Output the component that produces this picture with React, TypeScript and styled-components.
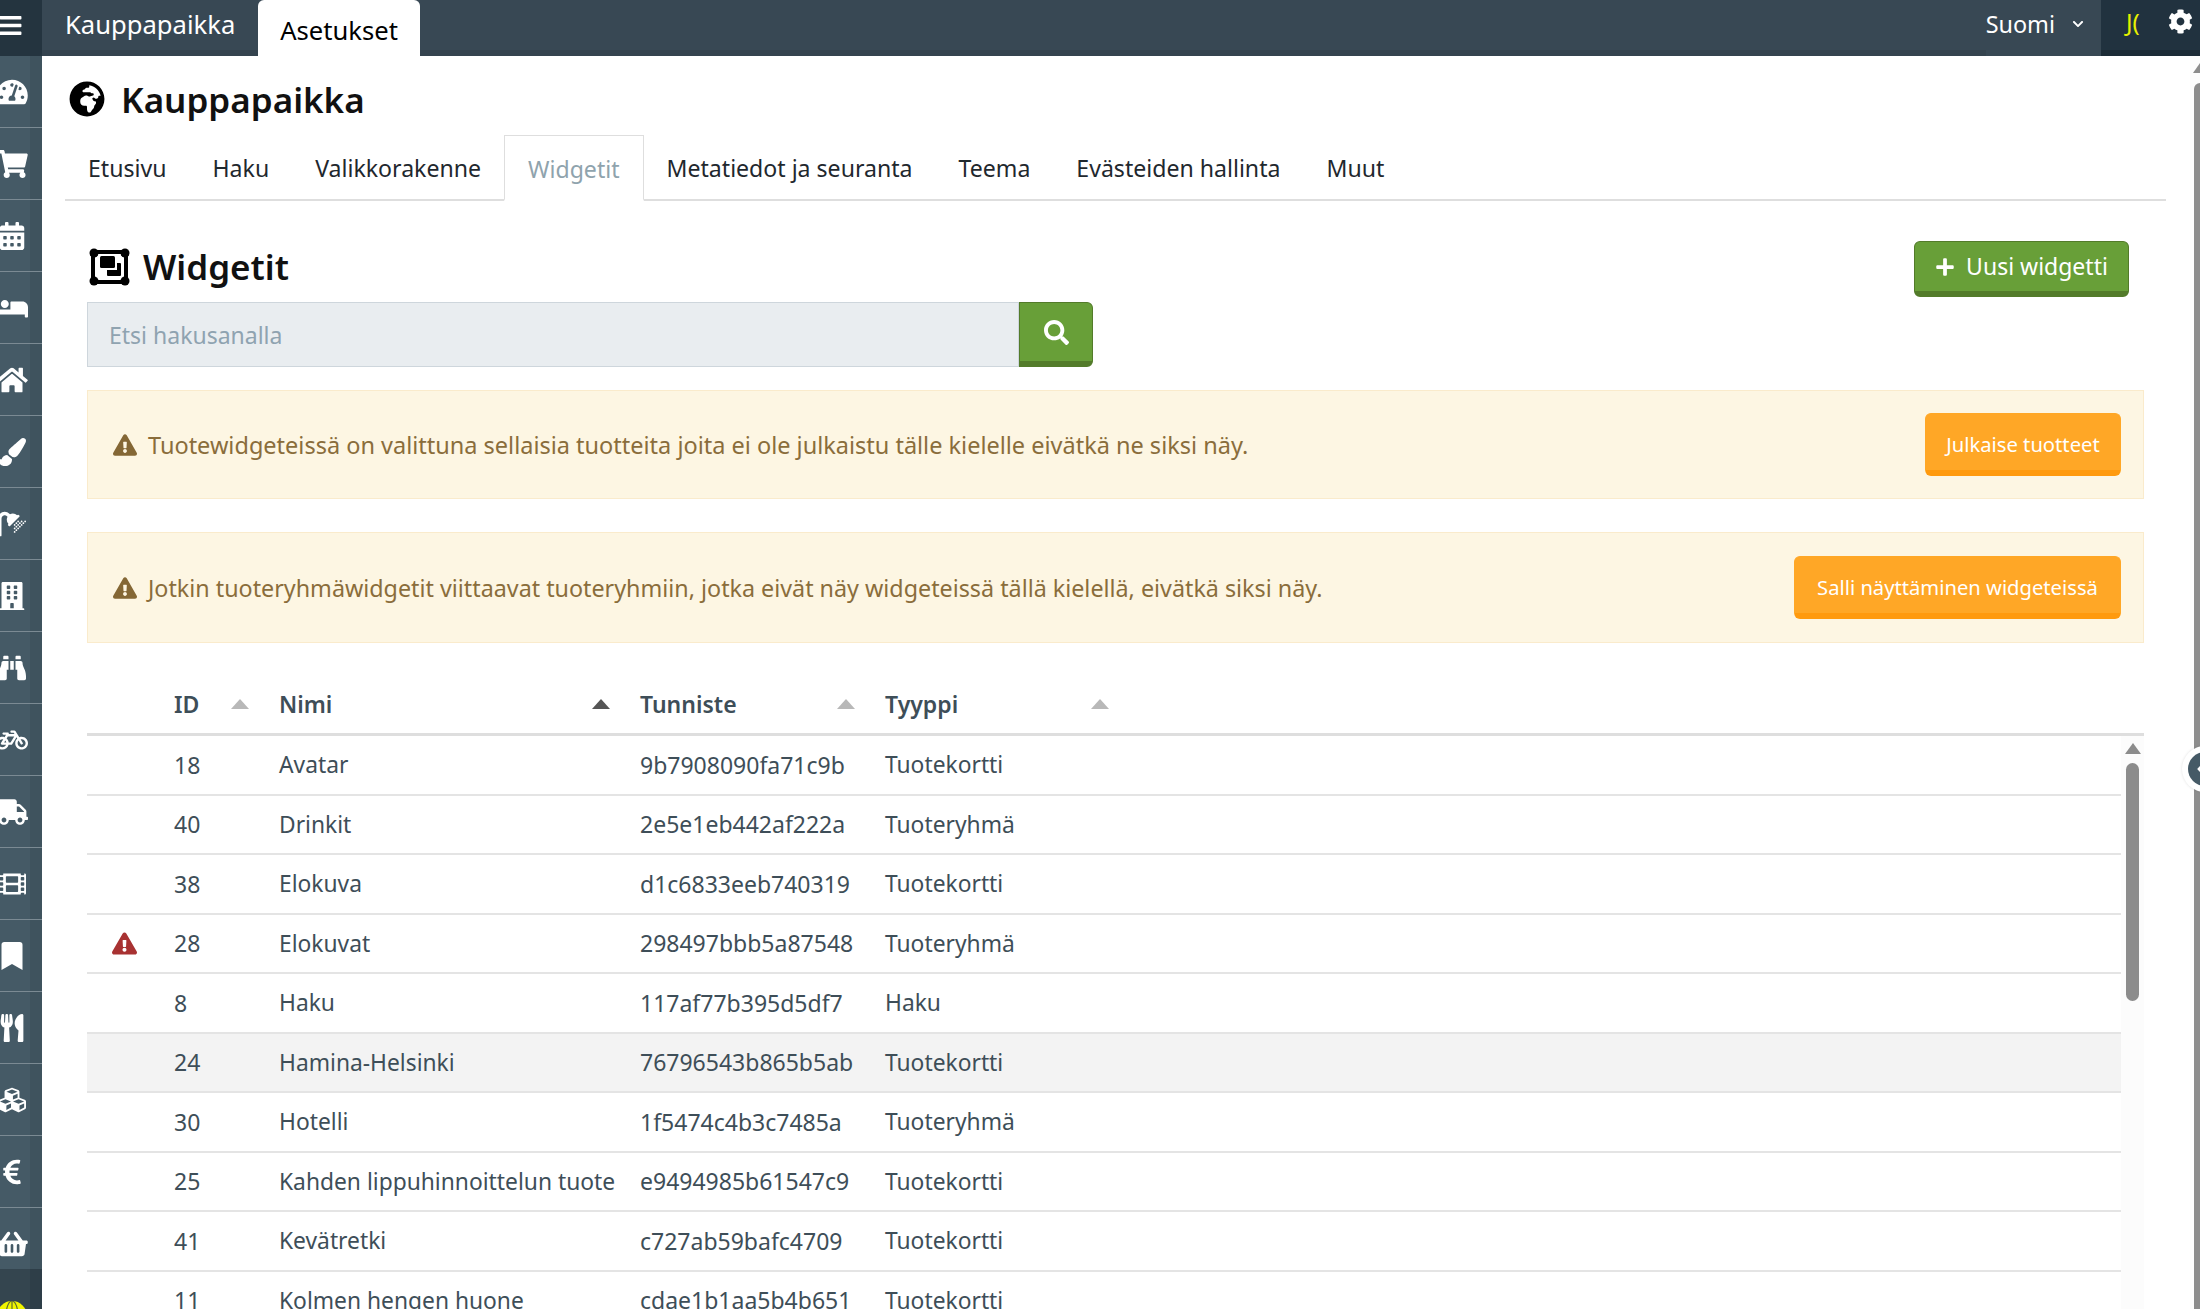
import React from 'react';
import styled, { createGlobalStyle } from 'styled-components';
import {
  FaBars,
  FaBed,
  FaBicycle,
  FaBinoculars,
  FaBookmark,
  FaBuilding,
  FaCalendarAlt,
  FaChevronDown,
  FaChevronLeft,
  FaCog,
  FaCubes,
  FaEuroSign,
  FaExclamationTriangle,
  FaFilm,
  FaGlobeAfrica,
  FaHome,
  FaPaintBrush,
  FaPlus,
  FaSearch,
  FaShoppingBasket,
  FaShoppingCart,
  FaShower,
  FaTachometerAlt,
  FaTruck,
  FaUtensils,
} from 'react-icons/fa';

const GlobalStyle = createGlobalStyle`
  html, body {
    margin: 0;
    padding: 0;
    height: 100%;
    overflow: hidden;
    background: #fff;
  }
  #root {
    height: 100%;
  }
  * {
    box-sizing: border-box;
  }
`;

const Page = styled.div`
  width: 2200px;
  height: 1309px;
  display: flex;
  flex-direction: column;
  position: relative;
  overflow: hidden;
  font-family: 'Noto Sans', 'Open Sans', sans-serif;
  color: #3e4e58;
`;

const TopBar = styled.header`
  height: 56px;
  flex: none;
  display: flex;
  background: #384854;
  border-bottom: 6px solid #34434e;
`;

const MenuButton = styled.div`
  width: 42px;
  height: 56px;
  flex: none;
  background: #24343f;
  color: #fff;
  font-size: 25px;
  display: flex;
  align-items: center;
  overflow: hidden;
  padding-bottom: 6px;
  svg {
    margin-left: -2px;
  }
`;

const AppTab = styled.div<{ $active?: boolean }>`
  height: 56px;
  flex: none;
  font-size: 25.6px;
  display: flex;
  align-items: center;
  padding: ${(p) => (p.$active ? '4px 22px 0' : '0 23px 8px')};
  color: ${(p) => (p.$active ? '#000' : '#fff')};
  background: ${(p) => (p.$active ? '#fff' : 'transparent')};
  border-radius: ${(p) => (p.$active ? '6px 6px 0 0' : '0')};
`;

const Spacer = styled.div`
  flex: 1;
`;

const Language = styled.div`
  height: 56px;
  display: flex;
  align-items: center;
  gap: 17px;
  padding: 0 17px 8px 0;
  color: #fff;
  font-size: 23.4px;
  background: #384854;
  svg {
    font-size: 12px;
  }
`;

const UserArea = styled.div`
  width: 99px;
  height: 56px;
  display: flex;
  align-items: center;
  justify-content: space-between;
  padding: 0 7px 8px 25px;
  background: #21323f;
  border-bottom: 6px solid #1c2b36;
  overflow: hidden;
`;

const Initials = styled.span`
  font-size: 24px;
  color: #e6f000;
`;

const GearIcon = styled(FaCog)`
  color: #fff;
  font-size: 25px;
`;

const Body = styled.div`
  flex: 1;
  min-height: 0;
  display: flex;
`;

const SideBar = styled.nav`
  width: 42px;
  flex: none;
  overflow: hidden;
  background: linear-gradient(90deg, #455a66 0, #455a66 30px, #3f535e 30px);
  display: flex;
  flex-direction: column;
`;

const SideItem = styled.div`
  height: 72px;
  flex: none;
  display: flex;
  align-items: center;
  color: #fff;
  border-bottom: 1px solid #7b8a93;
  svg {
    width: 32px;
    height: 28px;
    margin-left: -4px;
  }
`;

const SideFoot = styled.div`
  flex: 1;
  background: linear-gradient(90deg, #34454f 0, #34454f 30px, #2e3e48 30px);
  margin-top: -11px;
  position: relative;
  overflow: hidden;
`;

const YellowGlobe = styled.svg`
  position: absolute;
  left: -3px;
  top: 32px;
  width: 30px;
  height: 30px;
`;

const Main = styled.main`
  flex: 1;
  min-width: 0;
  padding: 0 56px 0 23px;
  display: flex;
  flex-direction: column;
`;

const PageTitle = styled.h1`
  margin: 25px 0 0 4px;
  height: 36px;
  display: flex;
  align-items: center;
  gap: 16px;
  font-size: 35px;
  font-weight: 600;
  color: #111;
  svg {
    font-size: 36px;
    color: #000;
  }
`;

const TabRow = styled.div`
  margin-top: 18px;
  height: 66px;
  flex: none;
  display: flex;
  align-items: stretch;
  border-bottom: 2px solid #dedede;
  margin-right: -22px;
`;

const PageTab = styled.div<{ $active?: boolean }>`
  padding: 2px 23px 0;
  margin-bottom: ${(p) => (p.$active ? '-2px' : '0')};
  display: flex;
  align-items: center;
  font-size: 23.1px;
  color: ${(p) => (p.$active ? '#8fa3ad' : '#1f282e')};
  background: #fff;
  border: ${(p) => (p.$active ? '1px solid #dedede' : 'none')};
  border-bottom: ${(p) => (p.$active ? '2px solid #fff' : 'none')};
`;

const Section = styled.section`
  padding-left: 22px;
  display: flex;
  flex-direction: column;
  min-height: 0;
  flex: 1;
`;

const SectionHead = styled.div`
  margin-top: 40px;
  height: 56px;
  flex: none;
  display: flex;
  align-items: center;
  justify-content: space-between;
  padding-right: 15px;
`;

const SectionTitle = styled.h2`
  margin: 0 0 6px;
  display: flex;
  align-items: center;
  gap: 13px;
  font-size: 35px;
  font-weight: 600;
  color: #111;
  padding-left: 2px;
`;

const WidgetsIcon = styled.svg`
  width: 41px;
  height: 38px;
  flex: none;
  margin-top: 2px;
`;

const Button = styled.button<{ $tone: 'green' | 'orange' }>`
  display: inline-flex;
  align-items: center;
  justify-content: center;
  gap: 11px;
  border: 1px solid ${(p) => (p.$tone === 'green' ? '#537b2a' : '#ffa726')};
  border-bottom: 6px solid ${(p) => (p.$tone === 'green' ? '#537b2a' : '#ff9a0e')};
  border-radius: 6px;
  background: ${(p) => (p.$tone === 'green' ? '#689f38' : '#ffa726')};
  color: #fff;
  font-family: inherit;
  font-size: 23px;
  padding: 0 22px;
`;

const NewButton = styled(Button)`
  height: 56px;
  width: 215px;
  padding: 0 0 2px;
  font-size: 23px;
  svg {
    font-size: 20px;
    margin-top: 2px;
  }
`;

const SearchRow = styled.div`
  margin-top: 5px;
  width: 1006px;
  height: 65px;
  flex: none;
  display: flex;
`;

const SearchInput = styled.div`
  flex: 1;
  display: flex;
  align-items: center;
  padding-left: 21px;
  font-size: 23px;
  color: #8fa3b0;
  background: #e9edf0;
  border: 1px solid #ced6dc;
`;

const SearchButton = styled(Button)`
  width: 74px;
  padding: 0;
  border-radius: 0 6px 6px 0;
  font-size: 25px;
`;

const Alert = styled.div<{ $tall?: boolean }>`
  height: ${(p) => (p.$tall ? '111px' : '109px')};
  flex: none;
  display: flex;
  align-items: center;
  justify-content: space-between;
  padding: 0 22px 0 25px;
  background: #fdf6e3;
  border: 1px solid #faebcc;
  color: #8a6d3b;
`;

const FirstAlert = styled(Alert)`
  margin-top: 23px;
`;

const SecondAlert = styled(Alert)`
  margin-top: 33px;
`;

const AlertText = styled.div<{ $size: number }>`
  display: flex;
  align-items: center;
  gap: 11px;
  font-size: ${(p) => p.$size}px;
  svg {
    font-size: 24px;
    color: #846735;
  }
`;

const AlertButton = styled(Button)<{ $w: number }>`
  width: ${(p) => p.$w}px;
  height: 63px;
  padding: 3px 0 0;
  font-size: 20.2px;
`;

const Columns = `
  display: grid;
  grid-template-columns: 87px 105px 361px 245px 1fr;
`;

const HeadRow = styled.div`
  ${Columns}
  margin-top: 18px;
  height: 75px;
  flex: none;
  align-items: center;
  border-bottom: 3px solid #dedede;
  padding-top: 14px;
`;

const HeadCell = styled.div`
  font-size: 23px;
  font-weight: 600;
  color: #3e4e58;
  display: flex;
  align-items: center;
  justify-content: space-between;
  padding-right: 30px;
`;

const SortArrow = styled.span<{ $on?: boolean }>`
  width: 0;
  height: 0;
  border-left: 9px solid transparent;
  border-right: 9px solid transparent;
  border-bottom: 10px solid ${(p) => (p.$on ? '#555' : '#b8b8b8')};
`;

const TypeHead = styled(HeadCell)`
  width: 224px;
  padding-right: 0;
`;

const TableWrap = styled.div`
  flex: 1;
  min-height: 0;
  display: flex;
  overflow: hidden;
`;

const Rows = styled.div`
  flex: 1;
  min-width: 0;
`;

const Row = styled.div<{ $hover?: boolean }>`
  ${Columns}
  height: 59.5px;
  align-items: center;
  font-size: 23px;
  border-bottom: 2px solid #e4e4e4;
  background: ${(p) => (p.$hover ? '#f3f3f3' : '#fff')};
`;

const TextCell = styled.div`
  font-size: 22.8px;
`;

const WarnCell = styled.div`
  padding-left: 25px;
  display: flex;
  align-items: center;
  color: #a83232;
  font-size: 25px;
`;

const Track = styled.div`
  width: 23px;
  flex: none;
  display: flex;
  flex-direction: column;
  align-items: center;
  padding-top: 7px;
  gap: 9px;
  background: #fcfcfc;
`;

const TrackArrow = styled.span`
  width: 0;
  height: 0;
  border-left: 8px solid transparent;
  border-right: 8px solid transparent;
  border-bottom: 11px solid #8c8c8c;
`;

const TrackThumb = styled.span`
  width: 13px;
  height: 238px;
  background: #8c8c8c;
  border-radius: 7px;
`;

const PageScroll = styled.div`
  position: absolute;
  right: 0;
  top: 56px;
  bottom: 0;
  width: 10px;
  background: #fcfcfc;
  display: flex;
  flex-direction: column;
  align-items: flex-end;
  gap: 10px;
  padding-top: 7px;
`;

const PageScrollArrow = styled.span`
  width: 0;
  height: 0;
  border-left: 7px solid transparent;
  border-bottom: 10px solid #8c8c8c;
`;

const PageScrollThumb = styled.span`
  width: 6px;
  flex: 1;
  background: #8c8c8c;
  border-radius: 6px 0 0 0;
`;

const Handle = styled.div`
  position: absolute;
  left: 2182px;
  top: 746px;
  width: 46px;
  height: 46px;
  border-radius: 50%;
  background: #fff;
  box-shadow: 0 0 3px #0000001f;
  display: flex;
  align-items: center;
  justify-content: center;
`;

const HandleDot = styled.div`
  width: 34px;
  height: 34px;
  border-radius: 50%;
  background: #455a66;
  color: #fff;
  font-size: 14px;
  display: flex;
  align-items: center;
  padding-left: 6px;
`;

const sideIcons = [
  FaTachometerAlt,
  FaShoppingCart,
  FaCalendarAlt,
  FaBed,
  FaHome,
  FaPaintBrush,
  FaShower,
  FaBuilding,
  FaBinoculars,
  FaBicycle,
  FaTruck,
  FaFilm,
  FaBookmark,
  FaUtensils,
  FaCubes,
  FaEuroSign,
  FaShoppingBasket,
];

const pageTabs = ['Etusivu', 'Haku', 'Valikkorakenne', 'Widgetit', 'Metatiedot ja seuranta', 'Teema', 'Evästeiden hallinta', 'Muut'];

const widgets = [
  { id: 18, name: 'Avatar', key: '9b7908090fa71c9b', type: 'Tuotekortti' },
  { id: 40, name: 'Drinkit', key: '2e5e1eb442af222a', type: 'Tuoteryhmä' },
  { id: 38, name: 'Elokuva', key: 'd1c6833eeb740319', type: 'Tuotekortti' },
  { id: 28, name: 'Elokuvat', key: '298497bbb5a87548', type: 'Tuoteryhmä', warn: true },
  { id: 8, name: 'Haku', key: '117af77b395d5df7', type: 'Haku' },
  { id: 24, name: 'Hamina-Helsinki', key: '76796543b865b5ab', type: 'Tuotekortti', hover: true },
  { id: 30, name: 'Hotelli', key: '1f5474c4b3c7485a', type: 'Tuoteryhmä' },
  { id: 25, name: 'Kahden lippuhinnoittelun tuote', key: 'e9494985b61547c9', type: 'Tuotekortti' },
  { id: 41, name: 'Kevätretki', key: 'c727ab59bafc4709', type: 'Tuotekortti' },
  { id: 11, name: 'Kolmen hengen huone', key: 'cdae1b1aa5b4b651', type: 'Tuotekortti' },
];

export default function App() {
  return (
    <Page>
      <GlobalStyle />
      <TopBar>
        <MenuButton>
          <FaBars />
        </MenuButton>
        <AppTab>Kauppapaikka</AppTab>
        <AppTab $active>Asetukset</AppTab>
        <Spacer />
        <Language>
          Suomi
          <FaChevronDown />
        </Language>
        <UserArea>
          <Initials>J(</Initials>
          <GearIcon />
        </UserArea>
      </TopBar>
      <Body>
        <SideBar>
          {sideIcons.map((Icon, i) => (
            <SideItem key={i}>
              <Icon />
            </SideItem>
          ))}
          <SideFoot>
            <YellowGlobe viewBox="0 0 30 30">
              <circle cx="15" cy="15" r="15" fill="#f0f500" />
              <ellipse cx="15" cy="15" rx="6" ry="15" fill="none" stroke="#5c6a35" strokeWidth="1.2" />
              <path d="M15 0v30" stroke="#5c6a35" strokeWidth="1.2" />
            </YellowGlobe>
          </SideFoot>
        </SideBar>
        <Main>
          <PageTitle>
            <FaGlobeAfrica />
            Kauppapaikka
          </PageTitle>
          <TabRow>
            {pageTabs.map((t) => (
              <PageTab key={t} $active={t === 'Widgetit'}>
                {t}
              </PageTab>
            ))}
          </TabRow>
          <Section>
            <SectionHead>
              <SectionTitle>
                <WidgetsIcon viewBox="0 0 41 38">
                  <rect x="4" y="4" width="33" height="30" fill="none" stroke="#000" strokeWidth="4" />
                  <circle cx="5" cy="5" r="4.5" />
                  <circle cx="36" cy="5" r="4.5" />
                  <circle cx="5" cy="33" r="4.5" />
                  <circle cx="36" cy="33" r="4.5" />
                  <rect x="11" y="8" width="15" height="12" rx="1.5" />
                  <path d="M28 15h3a1 1 0 0 1 1 1v11a1 1 0 0 1-1 1H19a1 1 0 0 1-1-1v-5h10z" />
                </WidgetsIcon>
                Widgetit
              </SectionTitle>
              <NewButton $tone="green">
                <FaPlus />
                Uusi widgetti
              </NewButton>
            </SectionHead>
            <SearchRow>
              <SearchInput>Etsi hakusanalla</SearchInput>
              <SearchButton $tone="green">
                <FaSearch />
              </SearchButton>
            </SearchRow>
            <FirstAlert>
              <AlertText $size={23.5}>
                <FaExclamationTriangle />
                Tuotewidgeteissä on valittuna sellaisia tuotteita joita ei ole julkaistu tälle kielelle eivätkä ne siksi näy.
              </AlertText>
              <AlertButton $tone="orange" $w={196}>
                Julkaise tuotteet
              </AlertButton>
            </FirstAlert>
            <SecondAlert $tall>
              <AlertText $size={23.3}>
                <FaExclamationTriangle />
                Jotkin tuoteryhmäwidgetit viittaavat tuoteryhmiin, jotka eivät näy widgeteissä tällä kielellä, eivätkä siksi näy.
              </AlertText>
              <AlertButton $tone="orange" $w={327}>
                Salli näyttäminen widgeteissä
              </AlertButton>
            </SecondAlert>
            <HeadRow>
              <div />
              <HeadCell>
                ID <SortArrow />
              </HeadCell>
              <HeadCell>
                Nimi <SortArrow $on />
              </HeadCell>
              <HeadCell>
                Tunniste <SortArrow />
              </HeadCell>
              <TypeHead>
                Tyyppi <SortArrow />
              </TypeHead>
            </HeadRow>
            <TableWrap>
              <Rows>
                {widgets.map((w) => (
                  <Row key={w.id} $hover={w.hover}>
                    <WarnCell>{w.warn && <FaExclamationTriangle />}</WarnCell>
                    <div>{w.id}</div>
                    <TextCell>{w.name}</TextCell>
                    <div>{w.key}</div>
                    <TextCell>{w.type}</TextCell>
                  </Row>
                ))}
              </Rows>
              <Track>
                <TrackArrow />
                <TrackThumb />
              </Track>
            </TableWrap>
          </Section>
        </Main>
      </Body>
      <PageScroll>
        <PageScrollArrow />
        <PageScrollThumb />
      </PageScroll>
      <Handle>
        <HandleDot>
          <FaChevronLeft />
        </HandleDot>
      </Handle>
    </Page>
  );
}
